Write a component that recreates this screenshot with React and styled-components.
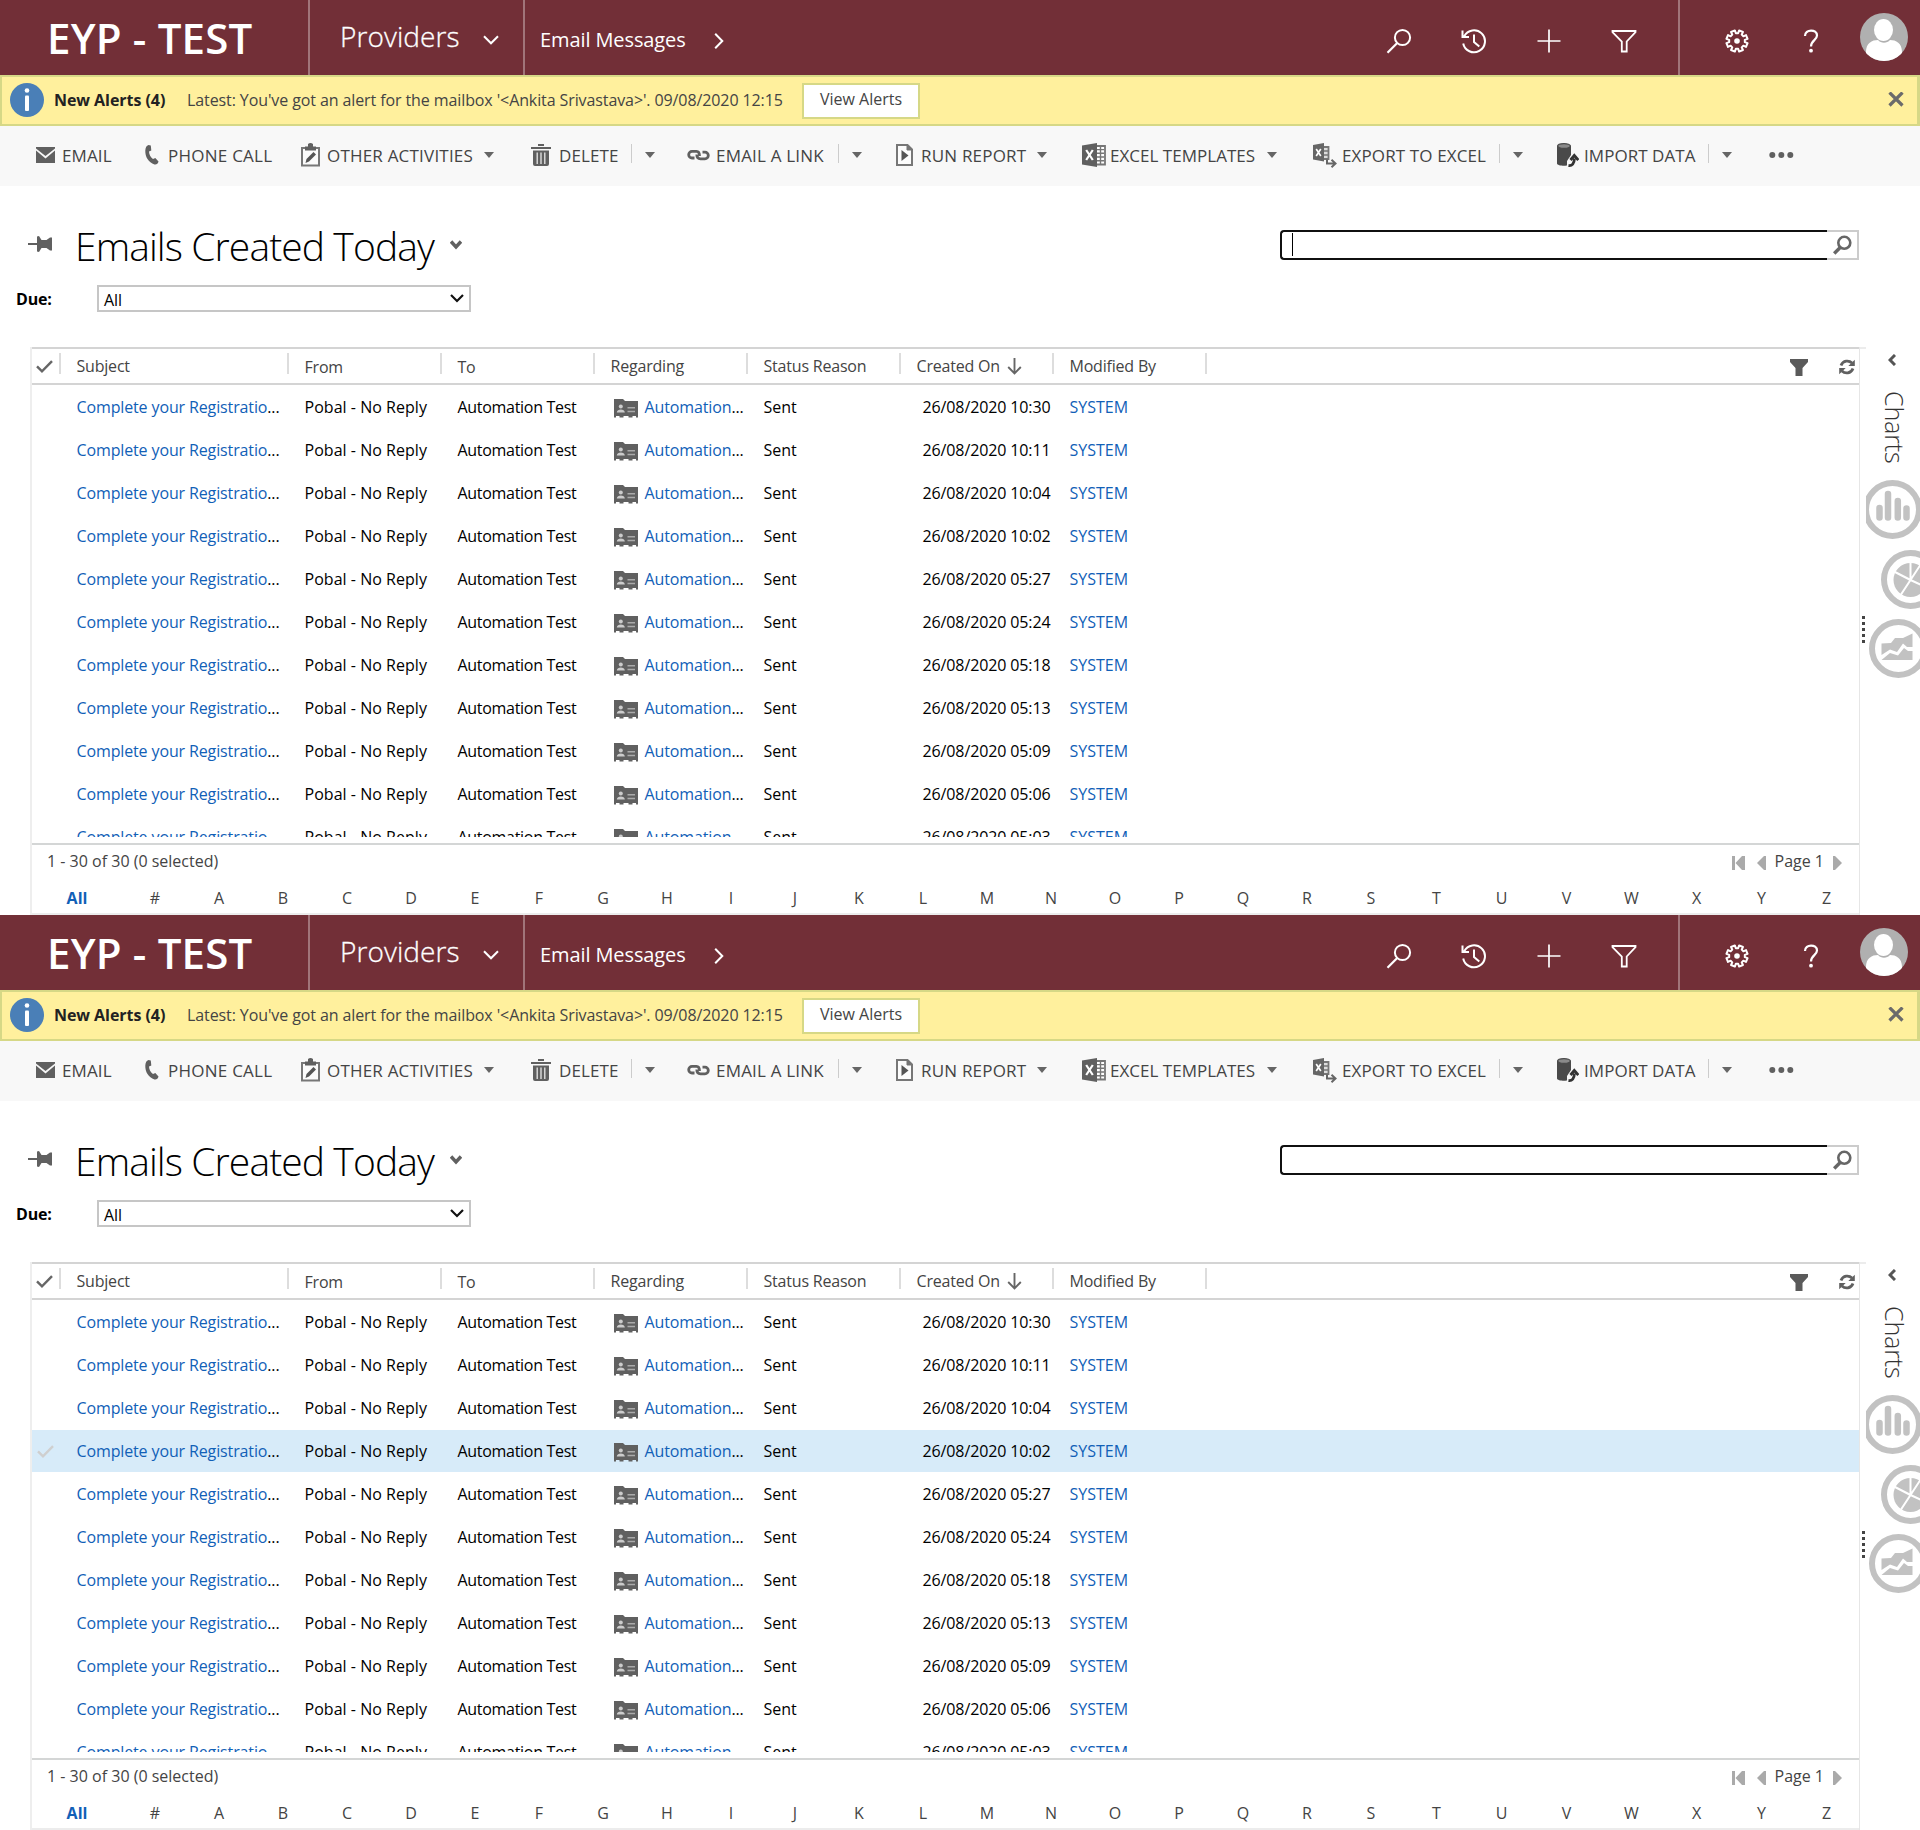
import React from "react";
import styled, { createGlobalStyle, css } from "styled-components";

const GlobalStyle = createGlobalStyle`
  *, *::before, *::after { box-sizing: border-box; }
  body { margin: 0; background: #fff; overflow: hidden; font-family: "Open Sans", "Noto Sans", sans-serif; font-size: 16px; color: #000; }
  svg { display: block; flex: none; }
`;

/* ---------- layout ---------- */
const Page = styled.div`width: 1920px;`;
const Screen = styled.section`
  height: 915px;
  display: flex;
  flex-direction: column;
  overflow: hidden;
`;

/* ---------- top bar ---------- */
const TopBar = styled.header`
  height: 75px;
  flex: none;
  display: flex;
  align-items: stretch;
  background: #722f37;
  color: #fff;
  white-space: nowrap;
`;
const Brand = styled.div`
  width: 308px;
  padding-left: 47px;
  display: flex;
  align-items: center;
  font-size: 42px;
  font-weight: 600;
  letter-spacing: 0.2px;
`;
const Area = styled.div`
  width: 215px;
  padding: 0 0 3px 30px;
  border-left: 2px solid #a1757a;
  display: flex;
  align-items: center;
  font-size: 28px;
  font-weight: 300;
  letter-spacing: 0.08px;
  -webkit-text-stroke: 0.3px #fff;
  svg { margin: 8px 0 0 23px; }
`;
const Crumb = styled.div`
  flex: 1;
  padding: 4px 0 0 15px;
  border-left: 2px solid #a1757a;
  display: flex;
  align-items: center;
  font-size: 20px;
  letter-spacing: -0.1px;
  svg { margin: 2px 0 0 28px; }
`;
const IconGroup = styled.div`
  display: flex;
  align-items: center;
  padding: 7px ${p => p.$end || 0}px 0 ${p => p.$start || 0}px;
  ${p => p.$divided && css`border-left: 2px solid #a1757a;`}
`;
const TopButton = styled.div`
  width: ${p => p.$w || 75}px;
  display: flex;
  justify-content: center;
`;
const Avatar = styled.div`margin: -8px 12px 0 12px;`;

/* ---------- alert bar ---------- */
const AlertBar = styled.div`
  height: 51px;
  flex: none;
  display: flex;
  align-items: center;
  padding: 0 13px 1px 8px;
  background: #fff09d;
  border: 2px solid #d6d886;
  border-right-width: 3px;
  white-space: nowrap;
`;
const AlertTitle = styled.b`
  width: 133px;
  margin-left: 10px;
  letter-spacing: -0.05px;
  color: #222;
`;
const AlertText = styled.span`
  width: 615px;
  color: #444;
  letter-spacing: -0.1px;
`;
const AlertButton = styled.div`
  width: 118px;
  height: 36px;
  margin: 1px auto 0 0;
  padding-bottom: 4px;
  display: flex;
  align-items: center;
  justify-content: center;
  background: #fff;
  border: 2px solid #d6d886;
  color: #444;
`;

/* ---------- command bar ---------- */
const CommandBar = styled.div`
  height: 60px;
  flex: none;
  display: flex;
  align-items: center;
  padding: 0 0 2px 36px;
  background: #f8f8f8;
`;
const Command = styled.div`
  width: ${p => p.$w}px;
  display: flex;
  align-items: center;
  font-size: 17px;
  letter-spacing: ${p => p.$track}px;
  color: #444;
  white-space: nowrap;
`;
const CommandIcon = styled.span`width: ${p => p.$w}px; flex: none;`;
const CommandLabel = styled.span`width: ${p => p.$w}px; flex: none;`;
const Split = styled.i`
  width: 1px;
  height: 19px;
  margin: -4px 1px 0 14px;
  background: #ccc;
`;
const Caret = styled.i`
  margin-left: 12px;
  border: 5px solid transparent;
  border-top: 6px solid #666;
  border-bottom: 0;
`;

/* ---------- view title ---------- */
const TitleRow = styled.div`
  height: 86px;
  flex: none;
  padding: 32px 61px 0 28px;
  display: flex;
  align-items: center;
`;
const Title = styled.h1`
  margin: 2px 16px 0 23px;
  font-size: 39px;
  font-weight: 300;
  letter-spacing: -0.9px;
  line-height: 50px;
  white-space: nowrap;
`;
const SearchBox = styled.div`
  width: 579px;
  height: 30px;
  margin-left: auto;
  display: flex;
`;
const SearchField = styled.div`
  width: 547px;
  padding: 1px 0 0 10px;
  border: 2px solid #101010;
  border-right: 0;
  border-radius: 4px 0 0 4px;
`;
const TextCursor = styled.i`
  display: block;
  width: 1px;
  height: 23px;
  background: #000;
`;
const SearchButton = styled.div`
  width: 32px;
  display: flex;
  align-items: center;
  justify-content: center;
  border: 2px solid #ccc;
  border-left: 0;
`;
const FilterRow = styled.div`
  height: 53px;
  flex: none;
  padding-left: 16px;
  display: flex;
  align-items: center;
`;
const FilterLabel = styled.b`width: 81px; letter-spacing: -0.2px;`;
const Select = styled.div`
  width: 374px;
  height: 27px;
  padding: 2px 5px 0 5px;
  display: flex;
  align-items: center;
  justify-content: space-between;
  border: 2px solid #c6c6c6;
  letter-spacing: -0.1px;
  svg { margin-top: -3px; }
`;

/* ---------- grid ---------- */
const Main = styled.div`
  flex: 1;
  margin-top: 22px;
  padding-left: 30px;
  display: flex;
  min-height: 0;
`;
const Grid = styled.div`
  width: 1830px;
  flex: none;
  display: flex;
  flex-direction: column;
  border-left: 2px solid #eee;
  border-right: 1px solid #e6e6e6;
`;
const columns = "29px 228px 153px 153px 153px 153px 153px 153px 1fr";
const HeaderRow = styled.div`
  height: 38px;
  flex: none;
  display: grid;
  grid-template-columns: ${columns};
  align-items: center;
  border-top: 2px solid #d4d4d4;
  border-bottom: 2px solid #d4d4d4;
  color: #444;
`;
const HeaderCell = styled.div`
  height: 100%;
  padding: ${p => p.$drop || 0}px 0 0 ${p => p.$pad === undefined ? 15.5 : p.$pad}px;
  display: flex;
  align-items: center;
  gap: 7px;
  letter-spacing: -0.2px;
  white-space: nowrap;
  background: linear-gradient(#ddd, #ddd) right 0 top 4px / 2px 21px no-repeat;
`;
const HeaderTools = styled.div`
  display: flex;
  justify-content: flex-end;
  align-items: center;
  gap: 31px;
  padding: 2px 4px 0 0;
`;
const Rows = styled.div`
  height: 452px;
  flex: none;
  padding-top: 1px;
  overflow: hidden;
`;
const Row = styled.div`
  height: 42px;
  margin-bottom: 1px;
  display: grid;
  grid-template-columns: ${columns};
  align-items: center;
  white-space: nowrap;
  background: ${p => (p.$selected ? "#d7ebf9" : "transparent")};
`;
const Cell = styled.div`
  padding-left: 15.5px;
  display: flex;
  align-items: center;
  letter-spacing: ${p => p.$track || 0}px;
  ${p => p.$right && css`justify-content: flex-end; padding-right: 3.5px;`}
`;
const MarkCell = styled.div`padding-left: 5px;`;
const Link = styled.span`color: #1160b7;`;
const RecordIcon = styled.span`margin: 3px 7px 0 3px;`;
const StatusRow = styled.div`
  height: 34px;
  flex: none;
  margin-top: 6px;
  padding: 0 17px 0 15px;
  display: flex;
  align-items: center;
  border-top: 2px solid #d4d6d6;
  color: #444;
`;
const Pager = styled.div`
  margin-left: auto;
  display: flex;
  align-items: center;
  svg { margin-top: 4px; }
  svg + svg { margin-left: 12px; }
`;
const PageLabel = styled.span`margin: 0 9px 0 9px;`;
const IndexRow = styled.div`
  flex: 1;
  padding: 5px 0 0;
  display: flex;
  align-items: center;
  border-bottom: 2px solid #ececec;
  color: #444;
`;
const IndexCell = styled.span`
  width: ${p => p.$w}px;
  margin-right: ${p => p.$mr || 0}px;
  flex: none;
  text-align: center;
  ${p => p.$active && css`font-weight: 700; color: #1160b7;`}
`;

/* ---------- chart panel ---------- */
const Resizer = styled.div`
  width: 6px;
  flex: none;
  padding: 267px 0 0 2px;
  border-top: 2px solid #ececec;
  display: flex;
  flex-direction: column;
  gap: 3px;
`;
const Grip = styled.i`width: 3px; height: 3px; background: #444; flex: none;`;
const Panel = styled.aside`
  width: 54px;
  overflow: hidden;
  padding-top: 7px;
  display: flex;
  flex-direction: column;
`;
const Collapse = styled.div`height: 37px; padding-left: 22px;`;
const PanelTitle = styled.div`
  width: 34px;
  height: 74px;
  margin: 0 0 15px 12px;
  writing-mode: vertical-rl;
  font-size: 25px;
  font-weight: 300;
  letter-spacing: -0.1px;
  line-height: 34px;
  color: #333;
`;
const ChartButton = styled.div`
  height: 69.5px;
  flex: none;
  margin-left: ${p => p.$x}px;
`;

/* ---------- icons ---------- */
const line = { fill: "none", stroke: "#fff", strokeWidth: 2 };

const Chevron = ({ w, h, d, sw = 2, color = "#fff" }) => (
  <svg width={w} height={h} viewBox={`0 0 ${w} ${h}`}><path d={d} fill="none" stroke={color} strokeWidth={sw} /></svg>
);
const SearchTop = () => (
  <svg width="26" height="26" viewBox="0 0 26 26"><g {...line}><circle cx="16.5" cy="9.5" r="7.6" /><path d="M11.2 15L1.5 24.7" strokeWidth="2.2" /></g></svg>
);
const HistoryTop = () => (
  <svg width="26" height="26" viewBox="0 0 26 26"><g {...line}><path d="M3.2 8.2A11 11 0 1 1 2.2 15.5M1.5 2.5V9H8M13 6.5V14L18.3 18.5" /></g></svg>
);
const PlusTop = () => (
  <svg width="24" height="24" viewBox="0 0 24 24"><path d="M12 .5V23.5M.5 12H23.5" fill="none" stroke="#fff" strokeWidth="1.7" /></svg>
);
const FilterTop = () => (
  <svg width="26" height="24" viewBox="0 0 26 24"><path d="M1.5 2H24.5V3.2L15.7 12.5V22.5H10.8V12.5L1.5 3.2Z" fill="none" stroke="#fff" strokeWidth="1.8" /></svg>
);
const gearPath = (() => {
  const pts = [];
  for (let i = 0; i < 8; i++) {
    [[-14, 7.9], [-11, 10.8], [11, 10.8], [14, 7.9]].forEach(([off, r]) => {
      const a = ((i * 45 + 22.5 + off) * Math.PI) / 180;
      pts.push(`${(12 + r * Math.cos(a)).toFixed(2)} ${(12 + r * Math.sin(a)).toFixed(2)}`);
    });
  }
  return `M${pts.join("L")}Z`;
})();
const GearTop = () => (
  <svg width="24" height="24" viewBox="0 0 24 24"><path d={gearPath} {...line} strokeLinejoin="round" /><circle cx="12" cy="12" r="2.8" fill="#fff" /></svg>
);
const HelpTop = () => (
  <svg width="16" height="24" viewBox="0 0 16 24"><path d="M2 7C2 -.2 14 -.2 14 6.5C14 11 8 11.5 8 17.5" {...line} strokeWidth="2.2" /><circle cx="8" cy="21.7" r="1.9" fill="#fff" /></svg>
);
const UserPhoto = ({ id }) => (
  <svg width="48" height="48" viewBox="0 0 48 48">
    <clipPath id={id}><circle cx="24" cy="24" r="24" /></clipPath>
    <g clipPath={`url(#${id})`}>
      <rect width="48" height="48" fill="#b0b0b0" />
      <path d="M6 48V39C6 30 12 27 18 27C21 30.5 27 30.5 30 27C36 27 42 30 42 39V48Z" fill="#fff" />
      <ellipse cx="23.5" cy="17" rx="9.5" ry="11" fill="#fff" />
    </g>
  </svg>
);
const Info = () => (
  <svg width="34" height="34" viewBox="0 0 34 34"><circle cx="17" cy="17" r="17" fill="#4a7fb7" /><circle cx="17" cy="7.5" r="2.3" fill="#fff" /><rect x="15" y="12.5" width="4" height="15.5" rx="1" fill="#fff" /></svg>
);
const Close = () => (
  <svg width="16" height="16" viewBox="0 0 16 16"><path d="M1.5 .5L14.500 13.5M14.5 .5L1.5 13.5" stroke="#6b6b6b" strokeWidth="3.2" /></svg>
);
const Mail = () => (
  <svg width="19" height="16" viewBox="0 0 19 16"><path d="M0 1.5V0H19V1.5L9.5 9Z" fill="#606060" /><path d="M0 3.5L9.5 11.5L19 3.5V16H0Z" fill="#606060" /></svg>
);
const Phone = () => (
  <svg width="14" height="20" viewBox="0 0 14 20"><path d="M3.5 0L5.8 .5L6.3 5.5L4 6.5C4.2 9.5 5.500 12 8 14L10.3 13L13.5 16.5C13 18.5 11.5 20 9.5 19.5C3.5 17 0 12 .3 5.5C.5 2.5 1.5 .5 3.5 0Z" fill="#606060" /></svg>
);
const Clipboard = () => (
  <svg width="19" height="24" viewBox="0 0 19 24"><path d="M1 5H18V22.5H1Z" fill="#fbfbfb" stroke="#777" strokeWidth="2" /><path d="M4 7.5V3.5H7V1Q9.5 -1 12 1V3.5H15V7.5Z" fill="#606060" /><path d="M4.5 20L5.5 16L12.5 9L15 11.5L8 18.5Z" fill="#555" /></svg>
);
const Trash = () => (
  <svg width="20" height="22" viewBox="0 0 20 22"><path d="M7 0H13V2H7ZM0 3H20V5H0ZM2 6.5H18V20Q18 22 16 22H4Q2 22 2 20Z" fill="#606060" /><path d="M6.2 8.5V20M10 8.5V20M13.8 8.5V20" stroke="#e8e8e8" strokeWidth="1.3" /></svg>
);
const Chain = () => (
  <svg width="23" height="13" viewBox="0 0 23 13"><g fill="none" stroke="#606060" strokeWidth="2.8"><path d="M7.5 9H5A3.3 3.3 0 0 1 5 2.4H9.5C12 2.4 12.5 4 12.5 7" /><path d="M15.5 3.2H18A3.3 3.3 0 0 1 18 9.8H13.500C11 9.8 9.8 8.600 9.8 5.6" /></g></svg>
);
const Report = () => (
  <svg width="17" height="22" viewBox="0 0 17 22"><path d="M1 1H11.5L16 5.5V21H1Z" fill="#fcfcfc" stroke="#777" strokeWidth="2" /><path d="M11 1V6H16" fill="#777" stroke="#777" /><path d="M5.5 6L12.5 11.5L5.5 17Z" fill="#555" /></svg>
);
const Sheet = () => (
  <svg width="24" height="24" viewBox="0 0 24 24"><path d="M14 3H23V21.5H14Z" fill="#fff" stroke="#777" strokeWidth="1.8" /><path d="M15 6.6H22M15 10.3H22M15 14H22M15 17.7H22M18.5 4V21" stroke="#777" strokeWidth="1.4" /><path d="M0 2.5L15 0V24L0 21.5Z" fill="#606060" /><path d="M4.2 7L10.8 17M10.8 7L4.2 17" stroke="#fff" strokeWidth="2.2" /></svg>
);
const Export = () => (
  <svg width="24" height="25" viewBox="0 0 24 25"><path d="M10 4H15.5V16H10" fill="#ddd" stroke="#777" strokeWidth="1.8" /><path d="M10 8H15M10 12H15" stroke="#777" strokeWidth="1.6" /><path d="M0 2L11 0V18.5L0 16.5Z" fill="#666" /><path d="M3.2 6L7.8 13M7.8 6L3.2 13" stroke="#fff" strokeWidth="1.7" /><path d="M14 16.5V20.5H21.5M18.5 16.8L22.5 20.5L18.5 24.2" fill="none" stroke="#666" strokeWidth="2" /></svg>
);
const Import = () => (
  <svg width="22" height="24" viewBox="0 0 22 24"><path d="M0 2.5V20.5C0 23.5 14 23.5 14 20.5V2.5Z" fill="#4a4a4a" /><ellipse cx="7" cy="3" rx="6.3" ry="2.4" fill="#8a8a8a" stroke="#4a4a4a" strokeWidth="1.2" /><path d="M10 24V18L14 12L22 18V20L14 24Z" fill="#f8f8f8" /><path d="M11.5 22.5C15 23 17.5 20.5 17.3 15.5M13.5 17L17.3 12.5L21.3 17" fill="none" stroke="#333" strokeWidth="2.8" /></svg>
);
const Dots = () => (
  <svg width="25" height="7" viewBox="0 0 25 7" fill="#606060"><circle cx="3.3" cy="3" r="3" /><circle cx="12.3" cy="3" r="3" /><circle cx="21.3" cy="3" r="3" /></svg>
);
const Pin = () => (
  <svg width="24" height="18" viewBox="0 0 24 18"><path d="M0 7H9V.5L11 0L13.5 4H18.5L22 1.5H24V14.5H22L18.5 12H13.5L11 16L9 15.5V9H0Z" fill="#606060" /></svg>
);
const Magnifier = () => (
  <svg width="20" height="20" viewBox="0 0 20 20"><g fill="none" stroke="#666" strokeWidth="2.6"><circle cx="12.3" cy="7.8" r="6" /><path d="M8.2 12.5L2.200 18.5" strokeWidth="3.4" /></g></svg>
);
const Check = ({ color = "#666" }) => (
  <svg width="17" height="13" viewBox="0 0 17 13"><path d="M1 6.3L6 11.3L16 1.2" fill="none" stroke={color} strokeWidth="2.4" /></svg>
);
const SortArrow = () => (
  <svg width="15" height="17" viewBox="0 0 15 17"><path d="M7.5 0V15M1.2 9L7.5 15.3L13.8 9" fill="none" stroke="#666" strokeWidth="1.9" /></svg>
);
const Funnel = () => (
  <svg width="18" height="17" viewBox="0 0 18 17"><path d="M0 0H18V3L12.5 9V17H5.5V9L0 3Z" fill="#5a5a5a" /></svg>
);
const Refresh = () => (
  <svg width="16" height="16" viewBox="0 0 16 16"><path d="M2 6.5C4 1.2 10 1 13 4M14 9.5C12 14.8 6 15 3 12" fill="none" stroke="#606060" strokeWidth="2.8" /><path d="M15.8 .8V7H9.300ZM.2 15.2V9H6.7Z" fill="#606060" /></svg>
);
const Card = () => (
  <svg width="24" height="19" viewBox="0 0 24 19"><path d="M0 0H9L11 2H24V18.5H22V17H18.500V18.5H14.5V17H9.500V18.5H5.500V17H2V18.5H0Z" fill="#606060" /><circle cx="6.8" cy="7.6" r="2" fill="#ccc" /><path d="M2.8 13.5C2.8 9.5 10.8 9.5 10.8 13.5Z" fill="#ccc" /><path d="M13.5 8.7H21M13.5 12.500H21" stroke="#aaa" strokeWidth="1.6" /></svg>
);
const First = () => (
  <svg width="13" height="14" viewBox="0 0 13 14"><path d="M0 0H3V14H0ZM13 0V14H10L3.5 7L10 0Z" fill="#aaa" /></svg>
);
const Prev = () => (
  <svg width="9" height="14" viewBox="0 0 9 14"><path d="M9 0V14H7L0 7L7 0Z" fill="#aaa" /></svg>
);
const Next = () => (
  <svg width="9" height="14" viewBox="0 0 9 14"><path d="M0 0V14H2L9 7L2 0Z" fill="#aaa" /></svg>
);
const Ring = ({ children }) => (
  <svg width="59" height="59" viewBox="0 0 59 59"><circle cx="29.5" cy="29.5" r="26.5" fill="#fff" stroke="#c2c2c2" strokeWidth="6" />{children}</svg>
);
const Bars = () => (
  <Ring><path d="M16.500 28V37.500M25 14V37.500M34.800 21V37.500M43.500 28.500V37.500" stroke="#c2c2c2" strokeWidth="6.5" strokeLinecap="round" /></Ring>
);
const Pie = () => (
  <Ring><circle cx="29.5" cy="30" r="17" fill="#c2c2c2" /><path d="M29.5 30V12M29.5 30L40 14M29.5 30L13 21.5M29.5 30L47 38M29.5 30L19 46" stroke="#fff" strokeWidth="2" /></Ring>
);
const AreaChart = () => (
  <Ring><path d="M12.500 36V24.500L22 24L26 19H34L43.500 14.500V28H38L34 24.500L28 33L21 30.500Z" fill="#c2c2c2" /><path d="M12.500 41L21 34L29 36.500L35 29L39 32H43.500V41Z" fill="#c2c2c2" /></Ring>
);

/* ---------- data ---------- */
const commands = [
  { w: 109, icon: <Mail />, iw: 26, label: "EMAIL", lw: 50 },
  { w: 156, icon: <Phone />, iw: 23, label: "PHONE CALL", lw: 104, track: 0.25 },
  { w: 230, icon: <Clipboard />, iw: 26, label: "OTHER ACTIVITIES", lw: 145, track: 0.2, caret: true },
  { w: 156, icon: <Trash />, iw: 28, label: "DELETE", lw: 58, split: true },
  { w: 209, icon: <Chain />, iw: 29, label: "EMAIL A LINK", lw: 108, track: 0.2, split: true },
  { w: 186, icon: <Report />, iw: 25, label: "RUN REPORT", lw: 104, track: 0.2, caret: true },
  { w: 231, icon: <Sheet />, iw: 28, label: "EXCEL TEMPLATES", lw: 145, track: 0.02, caret: true },
  { w: 244, icon: <Export />, iw: 29, label: "EXPORT TO EXCEL", lw: 143, split: true },
  { w: 212, icon: <Import />, iw: 27, label: "IMPORT DATA", lw: 110, track: 0.05, split: true },
];
const times = ["10:30", "10:11", "10:04", "10:02", "05:27", "05:24", "05:18", "05:13", "05:09", "05:06", "05:03"];
const letters = "#ABCDEFGHIJKLMNOPQRSTUVWXYZ".split("");

const EmailScreen = ({ id, focused, selected }) => (
  <Screen>
    <TopBar>
      <Brand>EYP - TEST</Brand>
      <Area>Providers<Chevron w={16} h={10} d="M1 1.2L8 8.3L15 1.2" /></Area>
      <Crumb>Email Messages<Chevron w={10} h={16} d="M1.2 .8L8.3 8L1.2 15.2" /></Crumb>
      <IconGroup $end={17}>
        <TopButton><SearchTop /></TopButton>
        <TopButton><HistoryTop /></TopButton>
        <TopButton><PlusTop /></TopButton>
        <TopButton><FilterTop /></TopButton>
      </IconGroup>
      <IconGroup $divided $start={19}>
        <TopButton><GearTop /></TopButton>
        <TopButton $w={74}><HelpTop /></TopButton>
        <Avatar><UserPhoto id={id} /></Avatar>
      </IconGroup>
    </TopBar>

    <AlertBar>
      <Info />
      <AlertTitle>New Alerts (4)</AlertTitle>
      <AlertText>Latest: You've got an alert for the mailbox '&lt;Ankita Srivastava&gt;'. 09/08/2020 12:15</AlertText>
      <AlertButton>View Alerts</AlertButton>
      <Close />
    </AlertBar>

    <CommandBar>
      {commands.map(c => (
        <Command key={c.label} $w={c.w} $track={c.track === undefined ? 0.12 : c.track}>
          <CommandIcon $w={c.iw}>{c.icon}</CommandIcon>
          <CommandLabel $w={c.lw}>{c.label}</CommandLabel>
          {c.split && <Split />}
          {(c.caret || c.split) && <Caret />}
        </Command>
      ))}
      <Dots />
    </CommandBar>

    <TitleRow>
      <Pin />
      <Title>Emails Created Today</Title>
      <Chevron w={12} h={10} d="M1 1.5L6 7L11 1.5" sw={3.4} color="#606060" />
      <SearchBox>
        <SearchField>{focused && <TextCursor />}</SearchField>
        <SearchButton><Magnifier /></SearchButton>
      </SearchBox>
    </TitleRow>
    <FilterRow>
      <FilterLabel>Due:</FilterLabel>
      <Select>All<Chevron w={14} h={9} d="M1 1L7 7L13 1" sw={2.2} color="#111" /></Select>
    </FilterRow>

    <Main>
      <Grid>
        <HeaderRow>
          <HeaderCell $pad={3.5}><Check /></HeaderCell>
          <HeaderCell>Subject</HeaderCell>
          <HeaderCell $drop={2}>From</HeaderCell>
          <HeaderCell $drop={2}>To</HeaderCell>
          <HeaderCell>Regarding</HeaderCell>
          <HeaderCell>Status Reason</HeaderCell>
          <HeaderCell>Created On<SortArrow /></HeaderCell>
          <HeaderCell>Modified By</HeaderCell>
          <HeaderTools><Funnel /><Refresh /></HeaderTools>
        </HeaderRow>
        <Rows>
          {times.map((t, i) => (
            <Row key={t} $selected={i === selected}>
              <MarkCell>{i === selected && <Check color="#cfcfcf" />}</MarkCell>
              <Cell $track={-0.13}><Link>Complete your Registratio</Link>...</Cell>
              <Cell $track={0.03}>Pobal - No Reply</Cell>
              <Cell $track={-0.3}>Automation Test</Cell>
              <Cell $track={-0.12}><RecordIcon><Card /></RecordIcon><Link>Automation</Link>...</Cell>
              <Cell>Sent</Cell>
              <Cell $right $track={-0.12}>26/08/2020 {t}</Cell>
              <Cell><Link>SYSTEM</Link></Cell>
            </Row>
          ))}
        </Rows>
        <StatusRow>
          1 - 30 of 30 (0 selected)
          <Pager><First /><Prev /><PageLabel>Page 1</PageLabel><Next /></Pager>
        </StatusRow>
        <IndexRow>
          <IndexCell $w={90} $mr={1} $active>All</IndexCell>
          {letters.map((l, i) => (
            <IndexCell key={l} $w={i < 20 ? 64 : 65} $mr={i === 19 ? 1 : 0}>{l}</IndexCell>
          ))}
        </IndexRow>
      </Grid>
      <Resizer><Grip /><Grip /><Grip /><Grip /><Grip /></Resizer>
      <Panel>
        <Collapse><Chevron w={8} h={12} d="M7 1L2 6L7 11" sw={3} color="#555" /></Collapse>
        <PanelTitle>Charts</PanelTitle>
        <ChartButton $x={-3.5}><Bars /></ChartButton>
        <ChartButton $x={14.5}><Pie /></ChartButton>
        <ChartButton $x={2.5}><AreaChart /></ChartButton>
      </Panel>
    </Main>
  </Screen>
);

export default function App() {
  return (
    <Page>
      <GlobalStyle />
      <EmailScreen id="user-a" focused selected={-1} />
      <EmailScreen id="user-b" selected={3} />
    </Page>
  );
}
